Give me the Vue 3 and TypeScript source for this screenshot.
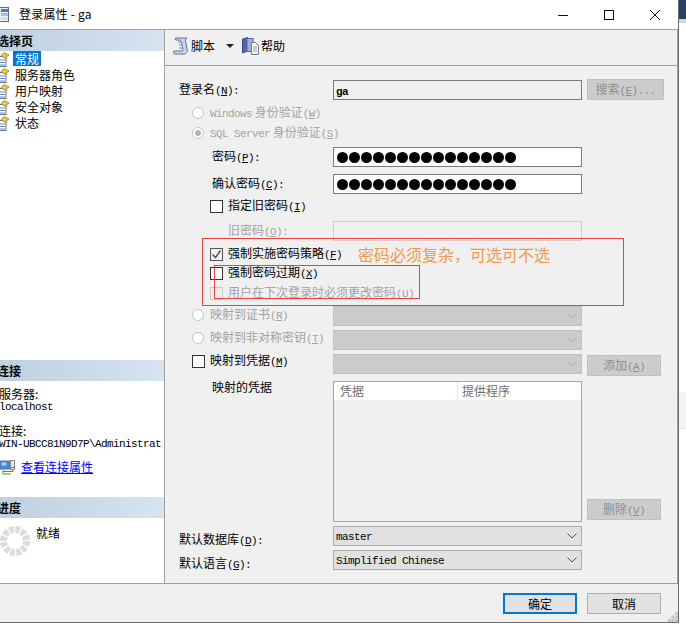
<template>
  <div class="screen">
    <div class="desktop-navy"></div>
    <div class="desktop-patch"></div>

    <div class="window">
      <header class="titlebar">
        <svg class="title-icon" width="11" height="15" viewBox="0 0 11 15">
          <rect x="0.5" y="0.5" width="9" height="14" fill="#e8eef6" stroke="#5c6f8c" />
          <rect x="2" y="2" width="7" height="3" fill="#4f78b8" />
          <rect x="2" y="6" width="7" height="3" fill="#a9bedd" />
          <rect x="2" y="10" width="7" height="3" fill="#d4deec" />
        </svg>
        <span class="title-text">登录属性 - ga</span>
        <div class="win-controls">
          <svg width="12" height="12" viewBox="0 0 12 12"><path d="M1 6.5h10" stroke="#111" fill="none" /></svg>
          <svg width="12" height="12" viewBox="0 0 12 12"><rect x="1.5" y="1.5" width="9" height="9" stroke="#111" fill="none" /></svg>
          <svg width="12" height="12" viewBox="0 0 12 12"><path d="M1 1l10 10M11 1L1 11" stroke="#111" fill="none" /></svg>
        </div>
      </header>

      <div class="body">
        <aside class="sidebar">
          <section class="side-pages">
            <h4 class="side-head">选择页</h4>
            <ul class="page-list">
              <li v-for="(page, i) in pages" :key="page" class="page-item">
                <svg class="page-icon" width="12" height="15" viewBox="0 0 12 15">
                  <rect x="0" y="4.5" width="8" height="10" fill="#fff" stroke="#64748c" />
                  <path d="M1 8h6M1 10.500h6M1 13h6" stroke="#6f8fc0" />
                  <path d="M6 0.500l5 2.500-4 3.500-4-3z" fill="#e9c545" stroke="#8a7326" stroke-width="0.700" />
                </svg>
                <span :class="['page-name', { selected: i === 0 }]">{{ page }}</span>
              </li>
            </ul>
          </section>

          <section class="side-conn">
            <h4 class="side-head">连接</h4>
            <div class="conn-info">
              <div class="conn-label">服务器:</div>
              <div class="m conn-value">localhost</div>
              <div class="conn-label second">连接:</div>
              <div class="m conn-value">WIN-UBCC81N9D7P\Administrat</div>
            </div>
            <div class="conn-link-row">
              <svg width="16" height="15" viewBox="0 0 16 15">
                <rect x="0" y="1" width="10" height="8" fill="#3d8de0" stroke="#5a6f90" />
                <rect x="1.500" y="2.500" width="5" height="3" fill="#9fd0f7" />
                <rect x="10.500" y="0.500" width="4" height="9" fill="#e4e4e4" stroke="#8a8a8a" />
                <path d="M3 11.500h10V9M11 8l2-1 2 1" stroke="#3a9a2c" fill="none" />
                <path d="M3 10v4h8" stroke="#3a9a2c" fill="none" />
              </svg>
              <a class="conn-link" href="#">查看连接属性</a>
            </div>
          </section>

          <section class="side-progress">
            <h4 class="side-head">进度</h4>
            <div class="progress-body">
              <svg class="spinner" width="30" height="30" viewBox="0 0 30 30">
                <circle cx="15" cy="15" r="11.500" fill="none" stroke="#dcdcdc" stroke-width="7" stroke-dasharray="4.500 1.520" />
              </svg>
              <span class="progress-text">就绪</span>
            </div>
          </section>
        </aside>

        <main class="pane">
          <div class="toolbar">
            <div class="tool">
              <svg width="16" height="18" viewBox="0 0 16 18">
                <path d="M3 1h11c-2 1-2 3-1 5l1 6c1 3-1 5-3 5H2c-1.500 0-2-2-1-3h8c1 0 1-1 0.500-3L8.500 5C8 3 5 3 3 3 1.500 3 1.500 1 3 1z" fill="#c9d6ea" stroke="#5d7498" />
                <path d="M5 5h3M6 8h3M6 11h3" stroke="#7d93b6" />
              </svg>
              <span>脚本</span>
            </div>
            <svg class="tool-caret" width="8" height="4" viewBox="0 0 8 4"><path d="M0 0h8L4 4z" fill="#222" /></svg>
            <div class="tool">
              <svg width="17" height="18" viewBox="0 0 17 18">
                <path d="M0.500 2l5-1.500V14L0.500 16z" fill="#4f66ae" stroke="#3b4b86" />
                <rect x="5" y="1.500" width="6" height="13" fill="#9db0dc" stroke="#5468a4" />
                <path d="M9.500 5.500h4l3 3v9h-7z" fill="#fff" stroke="#6c7a92" />
                <path d="M11 10h4M11 12h4M11 14h4" stroke="#8d9ab0" />
              </svg>
              <span>帮助</span>
            </div>
          </div>

          <div class="form">
            <label class="lbl">登录名<span class="m">(<u>N</u>):</span></label>
            <div class="field readonly"><span class="m bold">ga</span></div>
            <button class="btn disabled side-search">搜索<span class="m">(<u>E</u>)...</span></button>

            <div class="check-line col-wide indent-radio off">
              <i class="radio"></i><span><span class="m">Windows</span> 身份验证<span class="m">(<u>W</u>)</span></span>
            </div>
            <div class="check-line col-wide indent-radio off">
              <i class="radio on"></i><span><span class="m">SQL Server</span> 身份验证<span class="m">(<u>S</u>)</span></span>
            </div>

            <label class="lbl indent-label">密码<span class="m">(<u>P</u>):</span></label>
            <div class="field dots"><i v-for="n in 15" :key="n"></i></div>

            <label class="lbl indent-label">确认密码<span class="m">(<u>C</u>):</span></label>
            <div class="field dots"><i v-for="n in 15" :key="n"></i></div>

            <div class="check-line col-wide indent-check">
              <i class="box"></i><span>指定旧密码<span class="m">(<u>I</u>)</span></span>
            </div>

            <label class="lbl indent-old off">旧密码<span class="m">(<u>O</u>):</span></label>
            <div class="field disabled-empty"></div>

            <div class="check-line col-wide indent-check">
              <i class="box checked">
                <svg width="11" height="11" viewBox="0 0 11 11"><path d="M1.500 5.500l3 3 5-7" stroke="#555" stroke-width="1.500" fill="none" /></svg>
              </i>
              <span>强制实施密码策略<span class="m">(<u>F</u>)</span></span>
            </div>
            <div class="check-line col-wide indent-check">
              <i class="box"></i><span>强制密码过期<span class="m">(<u>X</u>)</span></span>
            </div>
            <div class="check-line col-wide indent-check off">
              <i class="box dim"></i><span>用户在下次登录时必须更改密码<span class="m">(<u>U</u>)</span></span>
            </div>

            <div class="check-line indent-radio off up1">
              <i class="radio"></i><span>映射到证书<span class="m">(<u>R</u>)</span></span>
            </div>
            <div class="select dim"><svg class="chev" width="10" height="6" viewBox="0 0 10 6"><path d="M0.500 0.500L5 5l4.500-4.500" /></svg></div>

            <div class="check-line indent-radio off up2">
              <i class="radio"></i><span>映射到非对称密钥<span class="m">(<u>T</u>)</span></span>
            </div>
            <div class="select dim"><svg class="chev" width="10" height="6" viewBox="0 0 10 6"><path d="M0.500 0.500L5 5l4.500-4.500" /></svg></div>

            <div class="check-line indent-radio up3">
              <i class="box"></i><span>映射到凭据<span class="m">(<u>M</u>)</span></span>
            </div>
            <div class="select dim"><svg class="chev" width="10" height="6" viewBox="0 0 10 6"><path d="M0.500 0.500L5 5l4.500-4.500" /></svg></div>
            <button class="btn disabled side-add">添加<span class="m">(<u>A</u>)</span></button>

            <label class="lbl indent-label up4">映射的凭据</label>
            <div class="cred-list">
              <div class="cred-head">
                <span class="cred-col-a">凭据</span>
                <span class="cred-col-b">提供程序</span>
              </div>
            </div>
            <button class="btn disabled side-del">删除<span class="m">(<u>V</u>)</span></button>

            <label class="lbl down4">默认数据库<span class="m">(<u>D</u>):</span></label>
            <div class="select"><span class="m">master</span><svg class="chev" width="10" height="6" viewBox="0 0 10 6"><path d="M0.500 0.500L5 5l4.500-4.500" /></svg></div>

            <label class="lbl down4">默认语言<span class="m">(<u>G</u>):</span></label>
            <div class="select"><span class="m">Simplified Chinese</span><svg class="chev" width="10" height="6" viewBox="0 0 10 6"><path d="M0.500 0.500L5 5l4.500-4.500" /></svg></div>
          </div>
        </main>
      </div>

      <footer class="footer">
        <button class="btn primary">确定</button>
        <button class="btn">取消</button>
        <svg class="gripper" width="10" height="10" viewBox="0 0 10 10">
          <path d="M7 0h3v3H7zM3.500 3.500h3v3h-3zM7 3.500h3v3H7zM0 7h3v3H0zM3.500 7h3v3h-3zM7 7h3v3H7z" fill="#c4c4c4" />
        </svg>
      </footer>
    </div>

    <!-- annotation drawn over the dialog -->
    <div class="mark mark-outer"></div>
    <div class="mark mark-inner"></div>
    <div class="note">密码必须复杂，可选可不选</div>
  </div>
</template>

<script setup lang="ts">
const pages: string[] = ['常规', '服务器角色', '用户映射', '安全对象', '状态']
</script>

<style>
html,
body {
  margin: 0;
  background: #fff;
  overflow: hidden;
}
</style>

<style scoped>
.screen {
  position: relative;
  width: 686px;
  height: 633px;
  background: #fff;
  overflow: hidden;
  font: 12px/16px "Noto Sans CJK SC", "Liberation Sans", sans-serif;
  color: #000;
}

.desktop-navy {
  position: absolute;
  left: 679px;
  top: 0;
  width: 7px;
  height: 19px;
  background: #2b3f66;
  border-bottom: 4px solid #ccd4e6;
}

.desktop-patch {
  position: absolute;
  left: 679px;
  top: 392px;
  width: 7px;
  height: 36px;
  background: #f4f4f4;
  border-bottom: 1px solid #e4e4e4;
}

.window {
  width: 678px;
  height: 622px;
  display: flex;
  flex-direction: column;
  border-right: 1px solid #6d6d6d;
  border-bottom: 1px solid #6d6d6d;
}

.titlebar {
  height: 29px;
  flex: none;
  display: flex;
  align-items: center;
  background: #fff;
  border-bottom: 1px solid #a0a0a0;
  overflow: hidden;
}

.title-icon {
  margin-left: -1px;
}

.title-text {
  margin-left: 9px;
  margin-top: -2px;
  font-size: 12px;
  letter-spacing: 0.2px;
}

.win-controls {
  margin-left: auto;
  display: flex;
  gap: 34px;
  margin-right: 17px;
}

.body {
  flex: 1;
  display: flex;
  min-height: 0;
}

.sidebar {
  width: 164px;
  flex: none;
  display: flex;
  flex-direction: column;
  background: #fff;
  border-right: 1px solid #a0a0a0;
  overflow: hidden;
}

.side-pages {
  height: 330px;
  flex: none;
}

.side-conn {
  height: 137px;
  flex: none;
}

.side-progress {
  flex: 1;
}

.side-head {
  margin: 0;
  height: 21px;
  text-indent: -3px;
  font-size: 12px;
  line-height: 21px;
  font-weight: 700;
  background: linear-gradient(90deg, #bfd0df, #d6e4f2);
}

.page-list {
  list-style: none;
  margin: 0;
  padding: 0;
}

.page-item {
  height: 16px;
  display: flex;
  align-items: flex-start;
}

.page-icon {
  margin-left: -2px;
  margin-top: 1px;
  flex: none;
}

.page-name {
  margin-left: 3px;
  padding: 0 2px;
  line-height: 15px;
}

.page-name.selected {
  background: #0078d7;
  color: #fff;
}

.conn-info {
  padding-top: 5px;
  margin-left: -1px;
}

.conn-label {
  height: 12px;
  line-height: 12px;
  margin-top: 2px;
}

.conn-label.second {
  margin-top: 12px;
}

.conn-value {
  height: 12px;
  line-height: 12px;
  margin-top: 1px;
  white-space: nowrap;
}

.conn-link-row {
  display: flex;
  align-items: center;
  gap: 5px;
  margin-top: 9px;
}

.conn-link {
  color: #0000ff;
  text-decoration: underline;
  white-space: nowrap;
}

.progress-body {
  display: flex;
  align-items: flex-start;
  padding-top: 8px;
}

.spinner {
  flex: none;
}

.progress-text {
  margin-left: 6px;
  margin-top: -1px;
}

.pane {
  flex: 1;
  min-width: 0;
  background: #f0f0f0;
  border-right: 1px solid #a0a0a0;
}

.toolbar {
  height: 35px;
  box-sizing: content-box;
  display: flex;
  align-items: center;
  padding: 0 0 0 8px;
  border-bottom: 1px solid #a0a0a0;
}

.tool {
  display: flex;
  align-items: center;
  gap: 2px;
  margin-top: -4px;
}

.tool-caret {
  margin: -4px 8px 0 11px;
}

.form {
  display: grid;
  grid-template-columns: 154px 249px 77px;
  grid-template-rows: 23px 20px 24px 27px 22px 25px 23px 19px 20px 23px 24px 24px 27px 145px 24px 20px;
  padding: 14px 0 0 14px;
  align-items: start;
}

.lbl,
.check-line {
  grid-column: 1;
  height: 20px;
  white-space: nowrap;
}

.lbl {
  line-height: 18px;
}

.check-line {
  line-height: 20px;
  display: flex;
  align-items: center;
}

.col-wide {
  grid-column: 1 / 3;
}

.field,
.select,
.cred-list {
  grid-column: 2;
}

.btn.side-search,
.btn.side-add,
.btn.side-del {
  grid-column: 3;
  margin-left: 5px;
}

.indent-label {
  padding-left: 33px;
}

.indent-old {
  padding-left: 49px;
}

.indent-radio {
  padding-left: 13px;
}

.indent-check {
  padding-left: 31px;
}

.off {
  color: #a3a3a3;
}

.up1 {
  margin-top: -1px;
}

.up2 {
  margin-top: -2px;
}

.up3 {
  margin-top: -3px;
}

.up4 {
  margin-top: -3px;
}

.down4 {
  margin-top: 4px;
}

/* latin runs: SimSun-like cell width of 6px */
.m {
  font-family: "Liberation Mono", monospace;
  font-size: 11px;
  letter-spacing: -0.6px;
}

.bold {
  font-weight: 700;
}

.radio {
  width: 12px;
  height: 12px;
  box-sizing: border-box;
  border: 1px solid #c4c4c4;
  border-radius: 50%;
  background: #fff;
  margin-right: 6px;
  flex: none;
  position: relative;
}

.radio.on::after {
  content: "";
  position: absolute;
  inset: 2px;
  border-radius: 50%;
  background: #b4b4b4;
}

.box {
  width: 13px;
  height: 13px;
  box-sizing: border-box;
  border: 1px solid #333;
  background: #fff;
  margin-right: 5px;
  flex: none;
  display: flex;
  align-items: center;
  justify-content: center;
}

.box.dim {
  border-color: #c8c8c8;
  background: #f0f0f0;
}

.box.checked {
  border-color: #555;
  background: #f0f0f0;
}

.field {
  height: 20px;
  box-sizing: border-box;
  border: 1px solid #7a7a7a;
  background: #fff;
  padding: 0 2px;
  line-height: 18px;
}

.field.readonly {
  background: #f0f0f0;
}

.field.disabled-empty {
  border-color: #cfcfcf;
  background: #f0f0f0;
}

.dots {
  display: flex;
  align-items: center;
  gap: 1px;
  padding-left: 3px;
}

.dots i {
  width: 11px;
  height: 11px;
  border-radius: 50%;
  background: #000;
}

.select {
  height: 20px;
  box-sizing: border-box;
  border: 1px solid #adadad;
  background: #e1e1e1;
  padding: 0 2px;
  line-height: 18px;
  display: flex;
  align-items: center;
  justify-content: space-between;
}

.select .m {
  padding-top: 1px;
}

.select.dim {
  background: #cccccc;
  border-color: #bfbfbf;
  justify-content: flex-end;
}

.chev {
  margin-right: 2px;
  fill: none;
  stroke: #555;
}

.select.dim .chev {
  stroke: #a8a8a8;
}

.btn {
  width: 74px;
  height: 21px;
  box-sizing: border-box;
  padding: 0;
  border: 1px solid #adadad;
  background: #e1e1e1;
  font: inherit;
  line-height: 18px;
  color: #000;
}

.btn.primary {
  border: 2px solid #0078d7;
}

.btn.disabled {
  background: #cccccc;
  border-color: #bfbfbf;
  color: #8e8e8e;
}

.side-search {
  width: 77px;
  margin-top: -1px;
}

.side-add {
  margin-top: 1px;
}

.side-del {
  align-self: end;
  margin-bottom: 6px;
}

.cred-list {
  height: 141px;
  box-sizing: border-box;
  border: 1px solid #a6a6a6;
}

.cred-head {
  height: 18px;
  display: flex;
  align-items: center;
  background: #fff;
  color: #6d6d6d;
  line-height: 18px;
}

.cred-col-a {
  width: 124px;
  box-sizing: border-box;
  padding-left: 6px;
  border-right: 1px solid #e4e4e4;
}

.cred-col-b {
  padding-left: 4px;
}

.footer {
  height: 39px;
  flex: none;
  position: relative;
  display: flex;
  justify-content: flex-end;
  gap: 10px;
  padding: 9px 17px 0 0;
  box-sizing: border-box;
  background: #f0f0f0;
  border-top: 1px solid #a0a0a0;
}

.gripper {
  position: absolute;
  right: 0;
  bottom: 0;
}

.mark {
  position: absolute;
  box-sizing: border-box;
  border: 1px solid #ee3f3f;
  pointer-events: none;
}

.mark-outer {
  left: 202px;
  top: 238px;
  width: 422px;
  height: 68px;
}

.mark-inner {
  left: 214px;
  top: 265px;
  width: 206px;
  height: 34px;
}

.note {
  position: absolute;
  left: 358px;
  top: 243px;
  font-size: 16px;
  line-height: 22px;
  color: #f79646;
  white-space: nowrap;
}
</style>
